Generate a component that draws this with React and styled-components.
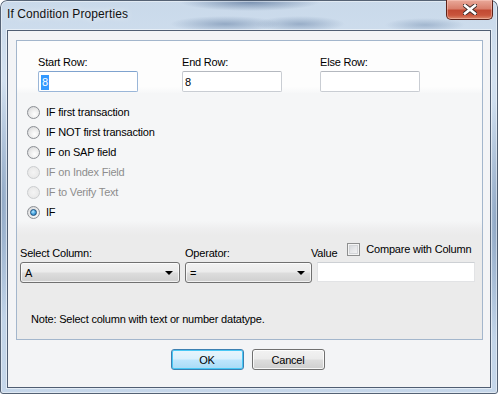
import styled, { createGlobalStyle } from "styled-components";

const Global = createGlobalStyle`
  html, body {
    margin: 0;
    padding: 0;
    background: #ffffff;
  }
  body {
    font-family: "Liberation Sans", Arial, sans-serif;
  }
`;

const radios = [
  { label: "IF first transaction" },
  { label: "IF NOT first transaction" },
  { label: "IF on SAP field" },
  { label: "IF on Index Field", disabled: true },
  { label: "IF to Verify Text", disabled: true },
  { label: "IF", checked: true },
];

const App = () => {
  return (
    <>
      <Global />
      <Window>
        <TitleBar>
          <Title>If Condition Properties</Title>
          <CloseButton>
            <svg width="14" height="11" viewBox="0 0 14 11">
              <path
                d="M2 1.5 L12 9.5 M12 1.5 L2 9.5"
                stroke="#3a2a28"
                strokeWidth="4.4"
                strokeLinecap="square"
              />
              <path
                d="M2 1.5 L12 9.5 M12 1.5 L2 9.5"
                stroke="#ffffff"
                strokeWidth="2.6"
                strokeLinecap="square"
              />
            </svg>
          </CloseButton>
        </TitleBar>

        <Client>
          <Panel>
            <RowsSection>
              <Field>
                <Label>Start Row:</Label>
                <TextBox $focused>
                  <Selected>8</Selected>
                </TextBox>
              </Field>
              <Field>
                <Label>End Row:</Label>
                <TextBox>8</TextBox>
              </Field>
              <Field>
                <Label>Else Row:</Label>
                <TextBox />
              </Field>
            </RowsSection>

            <RadioSection>
              {radios.map((r) => (
                <RadioRow key={r.label} $disabled={r.disabled}>
                  <Radio $checked={r.checked} $disabled={r.disabled} />
                  {r.label}
                </RadioRow>
              ))}
            </RadioSection>

            <ConditionSection>
              <ConditionGrid>
                <Label>Select Column:</Label>
                <Label>Operator:</Label>
                <ValueHeader>
                  <Label>Value</Label>
                  <CheckLabel>
                    <CheckBox />
                    Compare with Column
                  </CheckLabel>
                </ValueHeader>

                <Select>
                  <span>A</span>
                  <Arrow />
                </Select>
                <Select>
                  <span>=</span>
                  <Arrow />
                </Select>
                <ValueBox />
              </ConditionGrid>

              <Note>Note: Select column with text or number datatype.</Note>
            </ConditionSection>
          </Panel>

          <ButtonRow>
            <Button $primary>OK</Button>
            <Button>Cancel</Button>
          </ButtonRow>
        </Client>
      </Window>
    </>
  );
};

export default App;

const Window = styled.div`
  width: 498px;
  height: 394px;
  box-sizing: border-box;
  display: flex;
  flex-direction: column;
  border-radius: 7px 7px 3px 3px;
  box-shadow: inset 0 0 0 1px rgba(38, 52, 74, 0.75), inset 0 0 0 2px rgba(255, 255, 255, 0.45);
  background:
    radial-gradient(ellipse 70px 9px at 250px 2px, rgba(96, 122, 158, 0.75), transparent),
    radial-gradient(ellipse 55px 8px at 225px 24px, rgba(110, 136, 170, 0.6), transparent),
    radial-gradient(ellipse 45px 8px at 300px 24px, rgba(110, 136, 170, 0.55), transparent),
    radial-gradient(ellipse 40px 7px at 425px 25px, rgba(120, 146, 178, 0.5), transparent),
    radial-gradient(ellipse 8px 120px at 3px 200px, rgba(90, 118, 156, 0.45), transparent),
    radial-gradient(ellipse 8px 120px at 495px 220px, rgba(90, 118, 156, 0.45), transparent),
    linear-gradient(180deg, #c9d9ea 0%, #d3e1f0 20%, #bcd0e6 60%, #c6d7ea 100%);
  overflow: hidden;
`;

const TitleBar = styled.div`
  height: 30px;
  flex: none;
  display: flex;
  justify-content: space-between;
  align-items: flex-start;
`;

const Title = styled.div`
  margin: 7px 0 0 7px;
  font-family: "Liberation Sans", Arial, sans-serif;
  font-size: 12px;
  letter-spacing: 0.1px;
  line-height: 15px;
  color: #111;
  text-shadow: 0 0 6px rgba(255, 255, 255, 0.9);
`;

const CloseButton = styled.div`
  width: 47px;
  height: 20px;
  box-sizing: border-box;
  margin-right: 5px;
  display: flex;
  align-items: center;
  justify-content: center;
  border: 1px solid #5e2218;
  border-top: none;
  border-radius: 0 0 5px 5px;
  background: linear-gradient(180deg, #e9a99a 0%, #d9806d 45%, #c24a33 55%, #c9553c 80%, #dc8a6c 100%);
  box-shadow: inset 0 0 0 1px rgba(255, 210, 200, 0.45);
`;

const Client = styled.div`
  flex: 1;
  margin: 0 7px 6px 7px;
  display: flex;
  flex-direction: column;
  padding: 9px 7px 0 8px;
  border: 1px solid #4f5d72;
  background: #f3f4f6;
  box-shadow: 0 0 0 1px rgba(255, 255, 255, 0.5);
`;

const Panel = styled.div`
  height: 300px;
  box-sizing: border-box;
  display: flex;
  flex-direction: column;
  border: 1px solid #a3b6cc;
  color: #000;
  font-family: "Liberation Sans", Arial, sans-serif;
  font-size: 11px;
  letter-spacing: -0.2px;
`;

const RowsSection = styled.div`
  height: 52px;
  flex: none;
  box-sizing: border-box;
  padding: 15px 0 0 21px;
  display: grid;
  grid-template-columns: 144px 138px 100px;
  background: linear-gradient(180deg, #fdfdfd 0%, #fdfdfd 88%, #f6f7f8 100%);
`;

const Field = styled.div`
  display: flex;
  flex-direction: column;
  gap: 2px;
`;

const Label = styled.div`
  line-height: 13px;
  white-space: nowrap;
`;

const TextBox = styled.div`
  width: 100px;
  height: 21px;
  box-sizing: border-box;
  padding: 3px 2px 0 2px;
  line-height: 14px;
  font-size: 11px;
  background: #ffffff;
  border: 1px solid ${(p) => (p.$focused ? "#9ab6d8" : "#c9cdd3")};
  border-top-color: ${(p) => (p.$focused ? "#7fa3cf" : "#b4b8bf")};
  border-radius: 2px;
`;

const Selected = styled.span`
  display: inline-block;
  background: #3399ff;
  color: #ffffff;
  padding: 0 1px;
  line-height: 15px;
  margin-top: -1px;
`;

const RadioSection = styled.div`
  height: 136px;
  flex: none;
  box-sizing: border-box;
  padding: 9px 0 0 10px;
  display: flex;
  flex-direction: column;
  background: linear-gradient(180deg, #f5f6f7 0%, #f5f6f7 94%, #eeeeef 100%);
`;

const RadioRow = styled.div`
  height: 20px;
  display: flex;
  align-items: center;
  gap: 6px;
  color: ${(p) => (p.$disabled ? "#8d8d8d" : "#000")};
`;

const Radio = styled.span`
  width: 13px;
  height: 13px;
  flex: none;
  box-sizing: border-box;
  border-radius: 50%;
  border: 1px solid ${(p) => (p.$disabled ? "#cbcdcf" : "#8c8f94")};
  background: ${(p) =>
    p.$disabled
      ? "radial-gradient(circle at 50% 50%, #f4f4f4 0%, #e9e9e9 70%, #f8f8f8 100%)"
      : "radial-gradient(circle at 60% 65%, #ffffff 0%, #e8e8e8 55%, #c9ccd0 100%)"};
  display: flex;
  align-items: center;
  justify-content: center;

  &::after {
    content: "";
    display: ${(p) => (p.$checked ? "block" : "none")};
    width: 7px;
    height: 7px;
    border-radius: 50%;
    box-sizing: border-box;
    border: 1px solid #1d4f7c;
    background: radial-gradient(circle at 40% 35%, #bfe8ff 0%, #52aee6 45%, #1f6aa8 100%);
  }
`;

const ConditionSection = styled.div`
  flex: 1;
  box-sizing: border-box;
  padding: 14px 0 0 3px;
  display: flex;
  flex-direction: column;
  background: linear-gradient(180deg, #eeeeef 0%, #ebebeb 6%, #ebebeb 100%);
`;

const ConditionGrid = styled.div`
  display: grid;
  grid-template-columns: 160px 127px 158px;
  column-gap: 5px;
  row-gap: 2px;
  align-items: end;
`;

const ValueHeader = styled.div`
  display: flex;
  align-items: flex-end;
  margin-left: -6px;
  gap: 10px;
`;

const CheckLabel = styled.div`
  display: flex;
  align-items: center;
  gap: 6px;
  line-height: 13px;
  margin-bottom: 4px;
  white-space: nowrap;
`;

const CheckBox = styled.span`
  width: 13px;
  height: 13px;
  box-sizing: border-box;
  border: 1px solid #8e8f8f;
  background: linear-gradient(135deg, #cfd2d6 0%, #e6e7e9 50%, #f7f7f7 100%);
  box-shadow: inset 0 0 0 1px #f4f4f4, inset 0 0 0 2px #d3d5d8;
`;

const Select = styled.div`
  height: 21px;
  box-sizing: border-box;
  display: flex;
  align-items: center;
  justify-content: space-between;
  padding: 0 6px 0 4px;
  border: 1px solid #707070;
  border-radius: 3px;
  background: linear-gradient(180deg, #f2f2f2 0%, #ebebeb 48%, #dddddd 52%, #cfcfcf 100%);
  box-shadow: inset 0 0 0 1px rgba(255, 255, 255, 0.7);
`;

const Arrow = styled.span`
  width: 0;
  height: 0;
  border-left: 4px solid transparent;
  border-right: 4px solid transparent;
  border-top: 4px solid #000;
  margin-top: 1px;
`;

const ValueBox = styled.div`
  height: 20px;
  margin-bottom: 1px;
  box-sizing: border-box;
  background: #ffffff;
  border: 1px solid #e2e3e5;
  border-top-color: #cdd0d4;
`;

const Note = styled.div`
  margin: 30px 0 0 11px;
  line-height: 13px;
`;

const ButtonRow = styled.div`
  display: flex;
  justify-content: center;
  gap: 8px;
  padding: 9px 4px 0 0;
`;

const Button = styled.div`
  width: 73px;
  height: 21px;
  box-sizing: border-box;
  display: flex;
  align-items: center;
  justify-content: center;
  font-family: "Liberation Sans", Arial, sans-serif;
  font-size: 11px;
  letter-spacing: -0.2px;
  color: #000;
  border-radius: 3px;
  border: 1px solid ${(p) => (p.$primary ? "#3c7fb1" : "#707070")};
  background: ${(p) =>
    p.$primary
      ? "linear-gradient(180deg, #e8f5fc 0%, #d9f0fc 48%, #bee6fd 52%, #a9dbf6 100%)"
      : "linear-gradient(180deg, #f2f2f2 0%, #ebebeb 48%, #dddddd 52%, #cfcfcf 100%)"};
  box-shadow: inset 0 0 0 1px ${(p) => (p.$primary ? "#48c8f5" : "rgba(255,255,255,0.8)")};
`;
